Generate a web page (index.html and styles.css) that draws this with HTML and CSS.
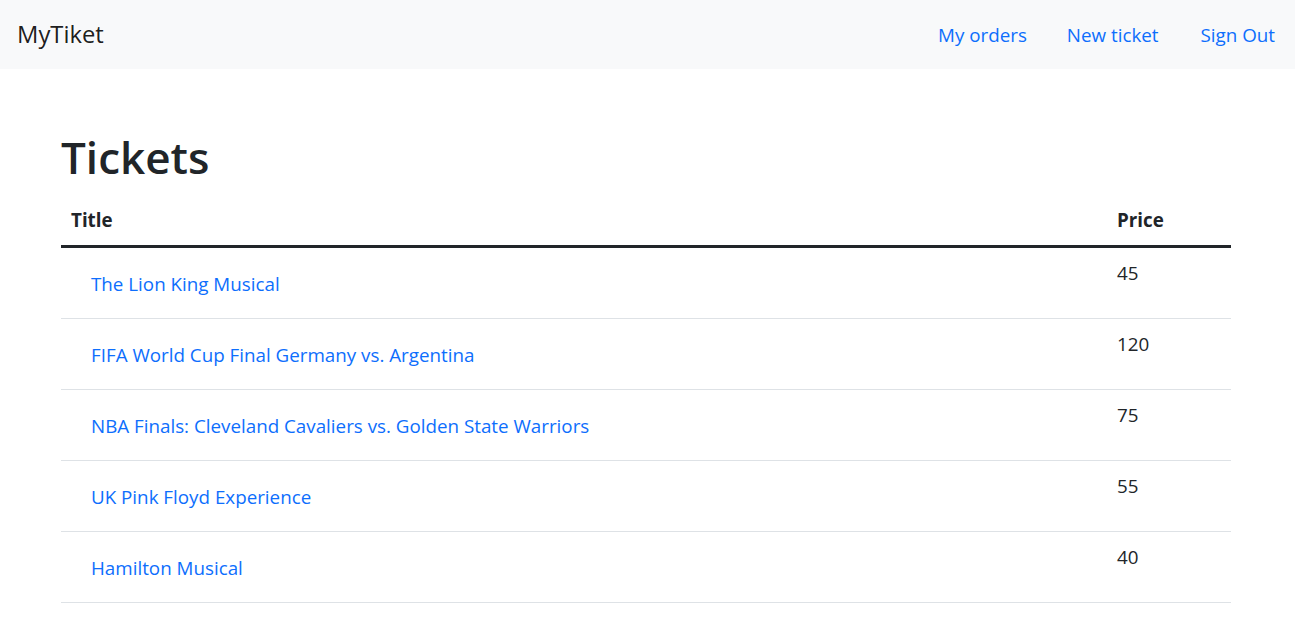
FILE: index.html
```html
<!DOCTYPE html>
<html lang="en">
<head>
<meta charset="utf-8">
<title>MyTiket</title>
<link rel="stylesheet" href="styles.css">
</head>
<body>
<nav class="navbar">
  <a class="brand" href="#">MyTiket</a>
  <ul class="nav">
    <li><a class="nav-link" href="#">My orders</a></li>
    <li><a class="nav-link" href="#">New ticket</a></li>
    <li><a class="nav-link" href="#">Sign Out</a></li>
  </ul>
</nav>
<main class="container">
  <h1 class="title">Tickets</h1>
  <table class="table">
    <thead>
      <tr><th>Title</th><th class="col-price">Price</th></tr>
    </thead>
    <tbody>
      <tr><td><a class="ticket-link" href="#">The Lion King Musical</a></td><td>45</td></tr>
      <tr><td><a class="ticket-link" href="#">FIFA World Cup Final Germany vs. Argentina</a></td><td>120</td></tr>
      <tr><td><a class="ticket-link" href="#">NBA Finals: Cleveland Cavaliers vs. Golden State Warriors</a></td><td>75</td></tr>
      <tr><td><a class="ticket-link" href="#">UK Pink Floyd Experience</a></td><td>55</td></tr>
      <tr><td><a class="ticket-link" href="#">Hamilton Musical</a></td><td>40</td></tr>
    </tbody>
  </table>
</main>
</body>
</html>
```
FILE: styles.css
```css
* { box-sizing: border-box; }
html, body {
  margin: 0;
  padding: 0;
  background: #fff;
  color: #212529;
  font-family: "Open Sans", "Noto Sans", sans-serif;
  font-size: 18.8px;
  line-height: 1.5;
}
a { text-decoration: none; color: #0d6efd; }

.navbar {
  height: 69px;
  background: #f8f9fa;
  display: flex;
  align-items: center;
  justify-content: space-between;
  padding: 0 0 0 17px;
}
.brand {
  color: rgba(0, 0, 0, 0.9);
  font-size: 23.8px;
  line-height: 37px;
}
.nav {
  display: flex;
  list-style: none;
  margin: 0;
  padding: 0;
}
.nav-link {
  display: block;
  padding: 10px 20px;
  color: #0d6efd;
  line-height: 30px;
}
.nav li:last-child .nav-link { padding-left: 22px; }

.container {
  padding: 56px 64px 0 61px;
}
.title {
  margin: 0 0 8px;
  padding-top: 2px;
  font-size: 44px;
  font-weight: 600;
  line-height: 60px;
}
.table {
  width: 100%;
  border-collapse: collapse;
}
.table th, .table td {
  padding: 10px;
  text-align: left;
  vertical-align: top;
  line-height: 30px;
  border-bottom: 1px solid #dee2e6;
}
.table th {
  font-weight: 700;
  vertical-align: bottom;
}
.table thead th {
  border-bottom: 3px solid #212529;
}
.col-price { width: 124px; }
.ticket-link {
  display: block;
  padding: 11px 20px 9px;
}
```
